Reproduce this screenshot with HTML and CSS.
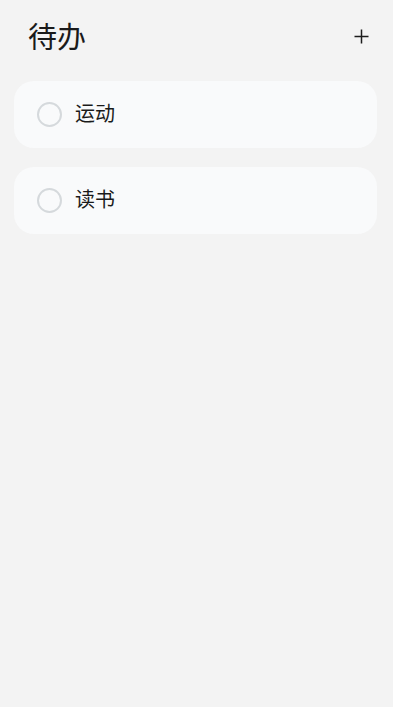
FILE: index.html
```html
<!DOCTYPE html>
<html lang="zh">
<head>
<meta charset="utf-8">
<meta name="viewport" content="width=device-width, initial-scale=1">
<title>待办</title>
<link rel="stylesheet" href="styles.css">
</head>
<body>
<div class="app">
  <header class="header">
    <h1 class="title">待办</h1>
    <button class="add" aria-label="添加">
      <svg width="15" height="15" viewBox="0 0 15 15"><path d="M7.5 0.5V14.5M0.5 7.5H14.5" stroke="#1c1c1c" stroke-width="1.5" fill="none"/></svg>
    </button>
  </header>
  <ul class="list">
    <li class="item"><span class="check"></span><span class="label">运动</span></li>
    <li class="item"><span class="check"></span><span class="label">读书</span></li>
  </ul>
</div>
</body>
</html>
```

FILE: styles.css
```css
html, body {
  margin: 0;
  padding: 0;
  background: #f3f3f3;
  font-family: "Noto Sans CJK SC", "Noto Sans", sans-serif;
  color: #1a1a1a;
}
.app {
  min-height: 707px;
  display: flex;
  flex-direction: column;
}
.header {
  height: 48px;
  margin-top: 12px;
  display: flex;
  align-items: center;
  justify-content: space-between;
  padding: 0 24px 0 28px;
}
.title {
  margin: 0;
  font-size: 29px;
  font-weight: 400;
  line-height: 1;
  padding-bottom: 1px;
}
.add {
  width: 15px;
  height: 15px;
  padding: 0;
  border: 0;
  background: none;
  display: flex;
}
.list {
  list-style: none;
  margin: 21px 16px 0 14px;
  padding: 0;
  display: flex;
  flex-direction: column;
  gap: 19px;
}
.item {
  height: 67px;
  box-sizing: border-box;
  background: #f9fafb;
  border-radius: 20px;
  display: flex;
  align-items: center;
  padding: 0 20px 0 23px;
  gap: 13px;
}
.check {
  width: 25px;
  height: 25px;
  box-sizing: border-box;
  border: 2px solid #d5d9dc;
  border-radius: 50%;
  flex: none;
}
.label {
  font-size: 20px;
  line-height: 1;
  padding-bottom: 3px;
}
```
